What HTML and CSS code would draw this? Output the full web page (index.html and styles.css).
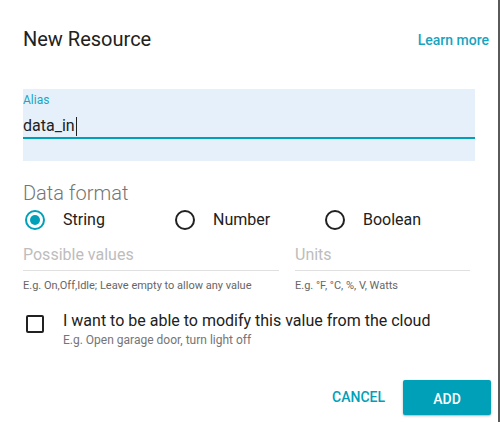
FILE: index.html
```html
<!DOCTYPE html>
<html>
<head>
<meta charset="utf-8">
<link rel="stylesheet" href="styles.css">
</head>
<body>
<div class="dialog">
  <div class="header">
    <h1 class="title">New Resource</h1>
    <a class="learn">Learn more</a>
  </div>

  <div class="alias-field">
    <div class="alias-label">Alias</div>
    <div class="alias-input"><span>data_in</span><span class="caret"></span></div>
  </div>

  <div class="section-title">Data format</div>
  <div class="radios">
    <label class="radio-opt"><span class="radio checked"></span><span class="radio-text">String</span></label>
    <label class="radio-opt"><span class="radio"></span><span class="radio-text">Number</span></label>
    <label class="radio-opt"><span class="radio"></span><span class="radio-text">Boolean</span></label>
  </div>

  <div class="fields">
    <div class="field field-values">
      <div class="field-input">Possible values</div>
      <div class="field-help">E.g. On,Off,Idle; Leave empty to allow any value</div>
    </div>
    <div class="field field-units">
      <div class="field-input">Units</div>
      <div class="field-help">E.g. °F, °C, %, V, Watts</div>
    </div>
  </div>

  <div class="check-row">
    <span class="check-box-wrap"><span class="check-box"></span></span>
    <div class="check-text">
      <div class="check-label">I want to be able to modify this value from the cloud</div>
      <div class="check-sub">E.g. Open garage door, turn light off</div>
    </div>
  </div>

  <div class="actions">
    <button class="btn btn-cancel">CANCEL</button>
    <button class="btn btn-add">ADD</button>
  </div>
</div>
</body>
</html>
```

FILE: styles.css
```css
* { box-sizing: border-box; }
html, body { margin: 0; padding: 0; background: #fff; }
body { font-family: Roboto, "Noto Sans", sans-serif; color: #212121; }

.dialog {
  width: 500px;
  height: 422px;
  padding: 0 9px 0 23px;
  border-right: 2px solid #5a5a5a;
  overflow: hidden;
}

.header {
  display: flex;
  justify-content: space-between;
  align-items: flex-start;
  padding-top: 27px;
}
.title {
  margin: 0;
  font-size: 20px;
  line-height: 24px;
  font-weight: 400;
  color: #212121;
}
.learn {
  font-size: 14px;
  line-height: 20px;
  font-weight: 500;
  color: #17a4c1;
  margin-top: 25px;
  margin-top: 3px;
  position: relative;
  top: 0;
}

.alias-field {
  margin-top: 38px;
  width: 452px;
  background: #e6f0fb;
  padding: 3px 0 22px 0;
}
.alias-label {
  font-size: 12px;
  line-height: 16px;
  color: #1aa5c2;
}
.alias-input {
  margin-top: 8px;
  font-size: 16px;
  line-height: 20px;
  color: #212121;
  padding-bottom: 1px;
  border-bottom: 2px solid #00a0b8;
  display: flex;
  align-items: center;
}
.caret {
  display: inline-block;
  width: 1px;
  height: 19px;
  background: #212121;
  margin-left: 1px;
}

.section-title {
  margin-top: 20px;
  font-size: 20px;
  line-height: 24px;
  font-weight: 300;
  color: #757575;
}

.radios {
  margin-top: 3px;
  display: flex;
}
.radio-opt {
  width: 150px;
  display: flex;
  align-items: center;
  height: 24px;
}
.radio {
  width: 24px;
  height: 24px;
  display: flex;
  align-items: center;
  justify-content: center;
  position: relative;
}
.radio::before {
  content: "";
  width: 20px;
  height: 20px;
  border: 2px solid #212121;
  border-radius: 50%;
  box-sizing: border-box;
}
.radio.checked::before { border-color: #00a0b8; }
.radio.checked::after {
  content: "";
  position: absolute;
  width: 10px;
  height: 10px;
  border-radius: 50%;
  background: #00a0b8;
  left: 7px;
  top: 7px;
}
.radio-text {
  margin-left: 16px;
  font-size: 16px;
  line-height: 24px;
  color: #212121;
}

.fields {
  margin-top: 13px;
  display: flex;
  gap: 16px;
}
.field-values { width: 256px; }
.field-units { width: 175px; }
.field-input {
  font-size: 16px;
  line-height: 20px;
  color: #bdbdbd;
  padding-bottom: 5px;
  border-bottom: 1px solid #e0e0e0;
}
.field-help {
  margin-top: 8px;
  font-size: 11px;
  line-height: 14px;
  color: #666666;
}

.check-row {
  margin-top: 18px;
  display: flex;
  align-items: flex-start;
}
.check-box-wrap {
  width: 24px;
  height: 24px;
  display: flex;
  align-items: center;
  justify-content: center;
  margin-top: 1px;
}
.check-box {
  width: 18px;
  height: 18px;
  border: 2px solid #212121;
  border-radius: 2px;
}
.check-text { margin-left: 16px; }
.check-label {
  font-size: 16px;
  line-height: 20px;
  color: #212121;
}
.check-sub {
  margin-top: 1px;
  font-size: 12px;
  line-height: 16px;
  color: #757575;
}

.actions {
  margin-top: 32px;
  margin-right: -2px;
  display: flex;
  justify-content: flex-end;
  align-items: center;
}
.btn {
  font-family: Roboto, "Noto Sans", sans-serif;
  font-size: 14px;
  font-weight: 500;
  border: 0;
  background: none;
  height: 35px;
  line-height: 35px;
  padding: 0;
  cursor: pointer;
}
.btn-cancel {
  color: #00a0b8;
  padding: 0 8px;
  margin-right: 10px;
}
.btn-add {
  width: 88px;
  background: #00a0b8;
  color: #fff;
  border-radius: 2px;
  box-shadow: 0 1px 3px rgba(0,0,0,0.2), 0 1px 1px rgba(0,0,0,0.12);
  padding-top: 2px;
}
```
